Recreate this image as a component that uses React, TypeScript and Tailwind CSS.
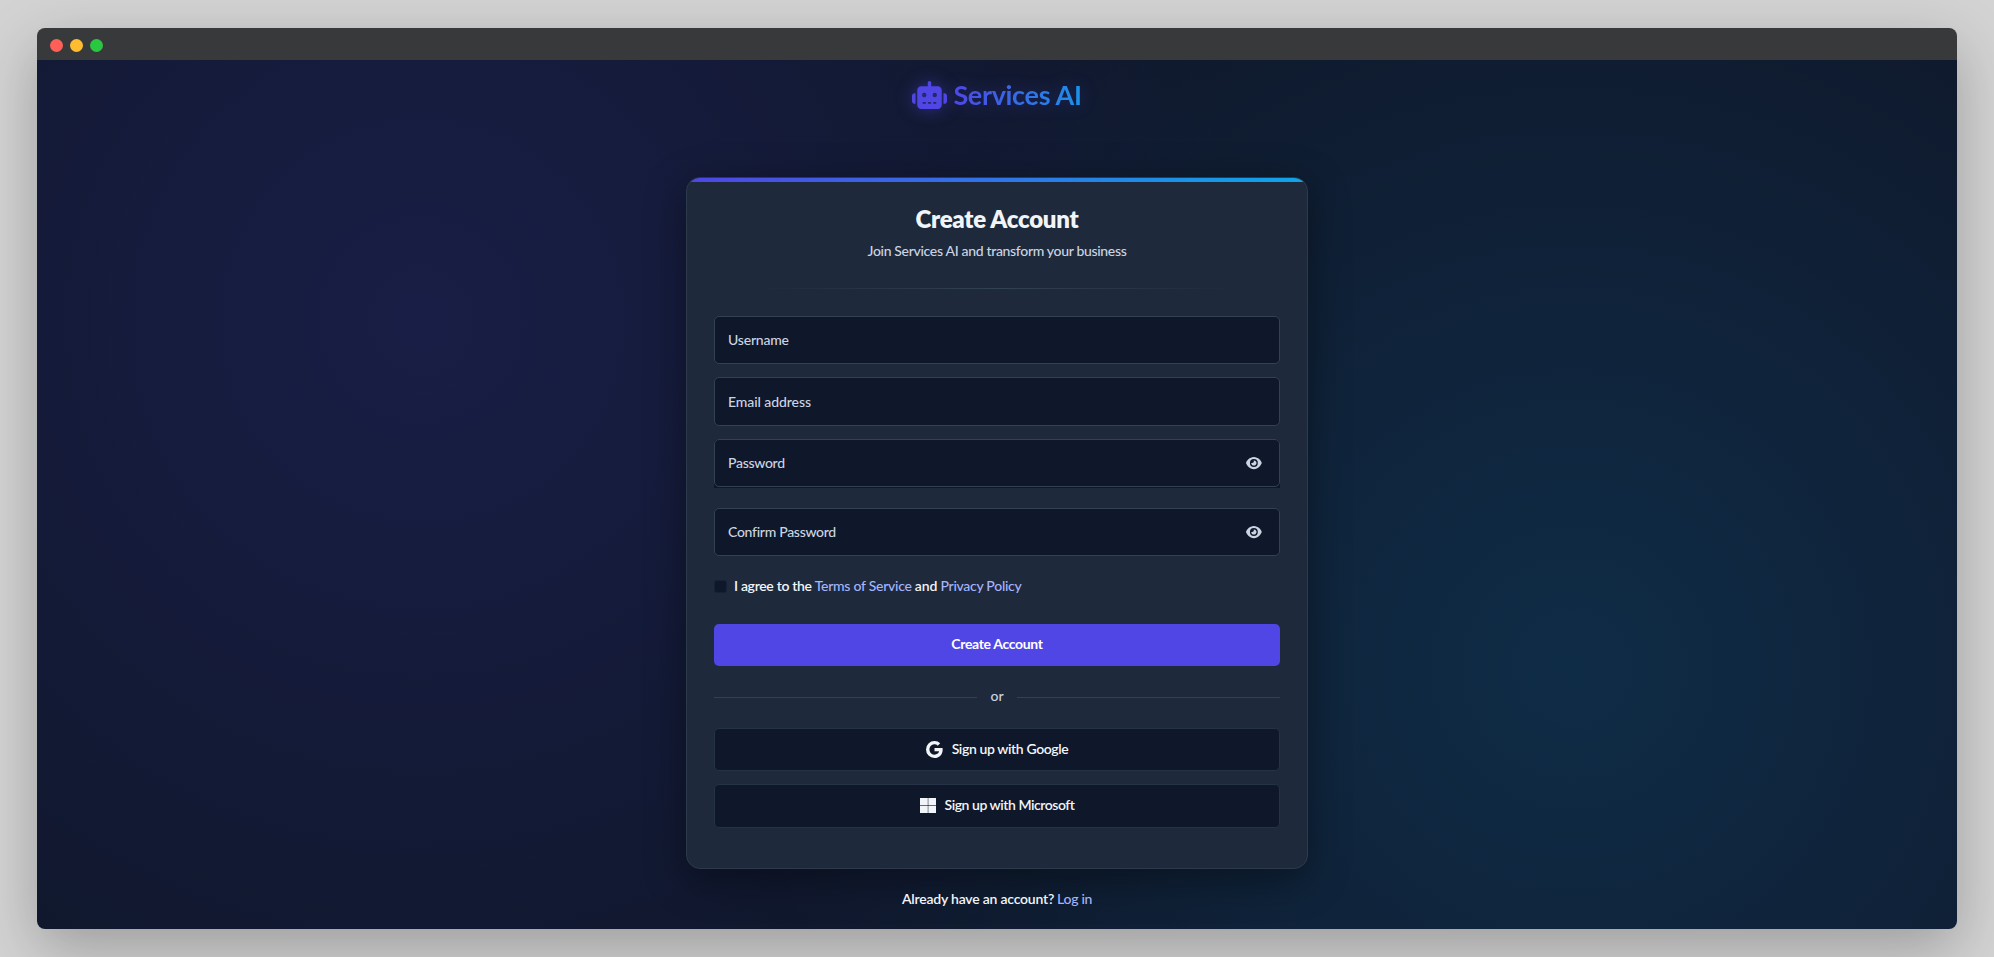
import type { ReactNode } from "react";
import { FaRobot, FaEye } from "react-icons/fa6";
import { BsGoogle } from "react-icons/bs";

type FieldProps = {
  label: string;
  className: string;
  labelClass: string;
  secret?: boolean;
};

function Field({ label, className, labelClass, secret }: FieldProps) {
  return (
    <div
      className={`flex items-center justify-between rounded-[5px] border border-[#334155] bg-[#0f172a] pr-[17px] pl-[13px] font-medium text-[#cbd5e1] ${className}`}
    >
      <span className={labelClass}>{label}</span>
      {secret && <FaEye className="h-[14px] w-[15.75px]" />}
    </div>
  );
}

function MicrosoftIcon() {
  return (
    <svg viewBox="0 0 16 15" className="mr-[9px] h-[15px] w-4" fill="currentColor">
      <rect x="0" y="0" width="7.8" height="7.1" />
      <rect x="8.3" y="0" width="7.7" height="7.1" />
      <rect x="0" y="7.7" width="7.8" height="7.3" />
      <rect x="8.3" y="7.7" width="7.7" height="7.3" />
    </svg>
  );
}

function SocialButton({ icon, children, className }: { icon: ReactNode; children: ReactNode; className: string }) {
  return (
    <button
      className={`flex w-full items-center justify-center rounded-[5px] border border-[#263245] bg-[#0f172a] font-semibold text-[#f1f5f9] ${className}`}
    >
      {icon}
      {children}
    </button>
  );
}

export default function App() {
  return (
    <div className="h-[957px] w-full overflow-hidden bg-[#d3d3d3] px-[37px] pt-7 font-['Lato','Liberation_Sans',sans-serif] text-[14px] leading-5">
      <div className="h-[901px] w-full overflow-hidden rounded-[8px] shadow-[0_20px_60px_rgba(0,0,0,0.26)]">
        <div className="flex h-8 items-center gap-[7px] bg-[#38393a] pt-0.5 pl-[13.4px]">
          <span className="size-[13px] rounded-full bg-[#ff5f57]" />
          <span className="size-[13px] rounded-full bg-[#febc2e]" />
          <span className="size-[13px] rounded-full bg-[#28c840]" />
        </div>

        <div className="flex h-[869px] flex-col items-center bg-[#0f172a] bg-[radial-gradient(circle_at_20%_30%,rgba(79,70,229,0.15)_0%,transparent_50%),radial-gradient(circle_at_80%_70%,rgba(14,165,233,0.15)_0%,transparent_50%)] pt-5">
          <div className="flex h-[30px] items-center gap-[6px]">
            <FaRobot className="h-7 w-[35px] text-[#4f46e5] drop-shadow-[0_0_8px_rgba(79,70,229,0.5)]" />
            <span className="bg-[linear-gradient(90deg,#4f46e5,#0ea5e9)] bg-[length:160px_100%] bg-clip-text text-[27px] leading-[30px] font-bold tracking-[-0.33px] text-transparent drop-shadow-[0_0_8px_rgba(79,70,229,0.3)]">
              Services AI
            </span>
          </div>

          <div className="mt-[67px] h-[692px] w-[622px] shrink-0 overflow-hidden rounded-[14px] border border-[#2c3a4c] bg-[#1e293b] shadow-[0_10px_40px_rgba(0,0,0,0.4)]">
            <div className="h-1 bg-[linear-gradient(90deg,#4f46e5,#0ea5e9)]" />
            <div className="px-[27px] pt-[22px]">
              <h1 className="text-center text-[24px] leading-[30px] font-extrabold tracking-[-0.26px] text-[#f1f5f9]">
                Create Account
              </h1>
              <p className="mt-[7px] text-center font-medium tracking-[-0.32px] text-[#cbd5e1]">
                Join Services AI and transform your business
              </p>
              <div className="mx-auto mt-[27px] h-px w-[480px] bg-[linear-gradient(90deg,transparent,#334155,transparent)]" />

              <Field label="Username" className="mt-[27px] h-12" labelClass="tracking-[-0.205px]" />
              <Field label="Email address" className="mt-[13px] h-[49px]" labelClass="tracking-[-0.077px]" />
              <div className="mt-[13px] rounded-t-[5px] bg-[#0f172a] pb-px">
                <Field label="Password" className="h-12" labelClass="tracking-[-0.295px]" secret />
              </div>
              <Field label="Confirm Password" className="mt-5 h-12" labelClass="tracking-[-0.286px]" secret />

              <label className="mt-5 flex h-5 items-center font-semibold text-[#f1f5f9]">
                <span className="mr-[7px] size-[13px] rounded-[3px] border border-[#172135] bg-[#0f172a]" />
                <span className="tracking-[-0.318px]">I agree to the</span>
                <a className="ml-[3px] font-medium tracking-[-0.26px] text-[#a5b4fc]">Terms of Service</a>
                <span className="ml-[3px]">and</span>
                <a className="ml-[3px] font-medium tracking-[-0.28px] text-[#a5b4fc]">Privacy Policy</a>
              </label>

              <button className="mt-7 flex h-[42px] w-full items-center justify-center rounded-[5px] bg-[#4f46e5] pb-0.5 font-bold tracking-[-0.33px] text-white">
                Create Account
              </button>

              <div className="mt-[21px] flex h-5 items-center gap-[13px] font-medium text-[#cbd5e1]">
                <span className="h-px flex-1 bg-[#334155]" />
                <span className="pb-0.5">or</span>
                <span className="h-px flex-1 bg-[#334155]" />
              </div>

              <SocialButton
                className="mt-[21px] h-[43px] pb-px tracking-[-0.38px]"
                icon={<BsGoogle className="mr-[9px] size-[17px]" />}
              >
                Sign up with Google
              </SocialButton>
              <SocialButton
                className="mt-[13px] h-11 pb-0.5 tracking-[-0.45px]"
                icon={<MicrosoftIcon />}
              >
                Sign up with Microsoft
              </SocialButton>
            </div>
          </div>

          <p className="mt-5 flex gap-[3px] font-semibold text-[#f1f5f9]">
            <span className="tracking-[-0.21px]">Already have an account?</span>
            <a className="font-medium tracking-[-0.3px] text-[#a5b4fc]">Log in</a>
          </p>
        </div>
      </div>
    </div>
  );
}
